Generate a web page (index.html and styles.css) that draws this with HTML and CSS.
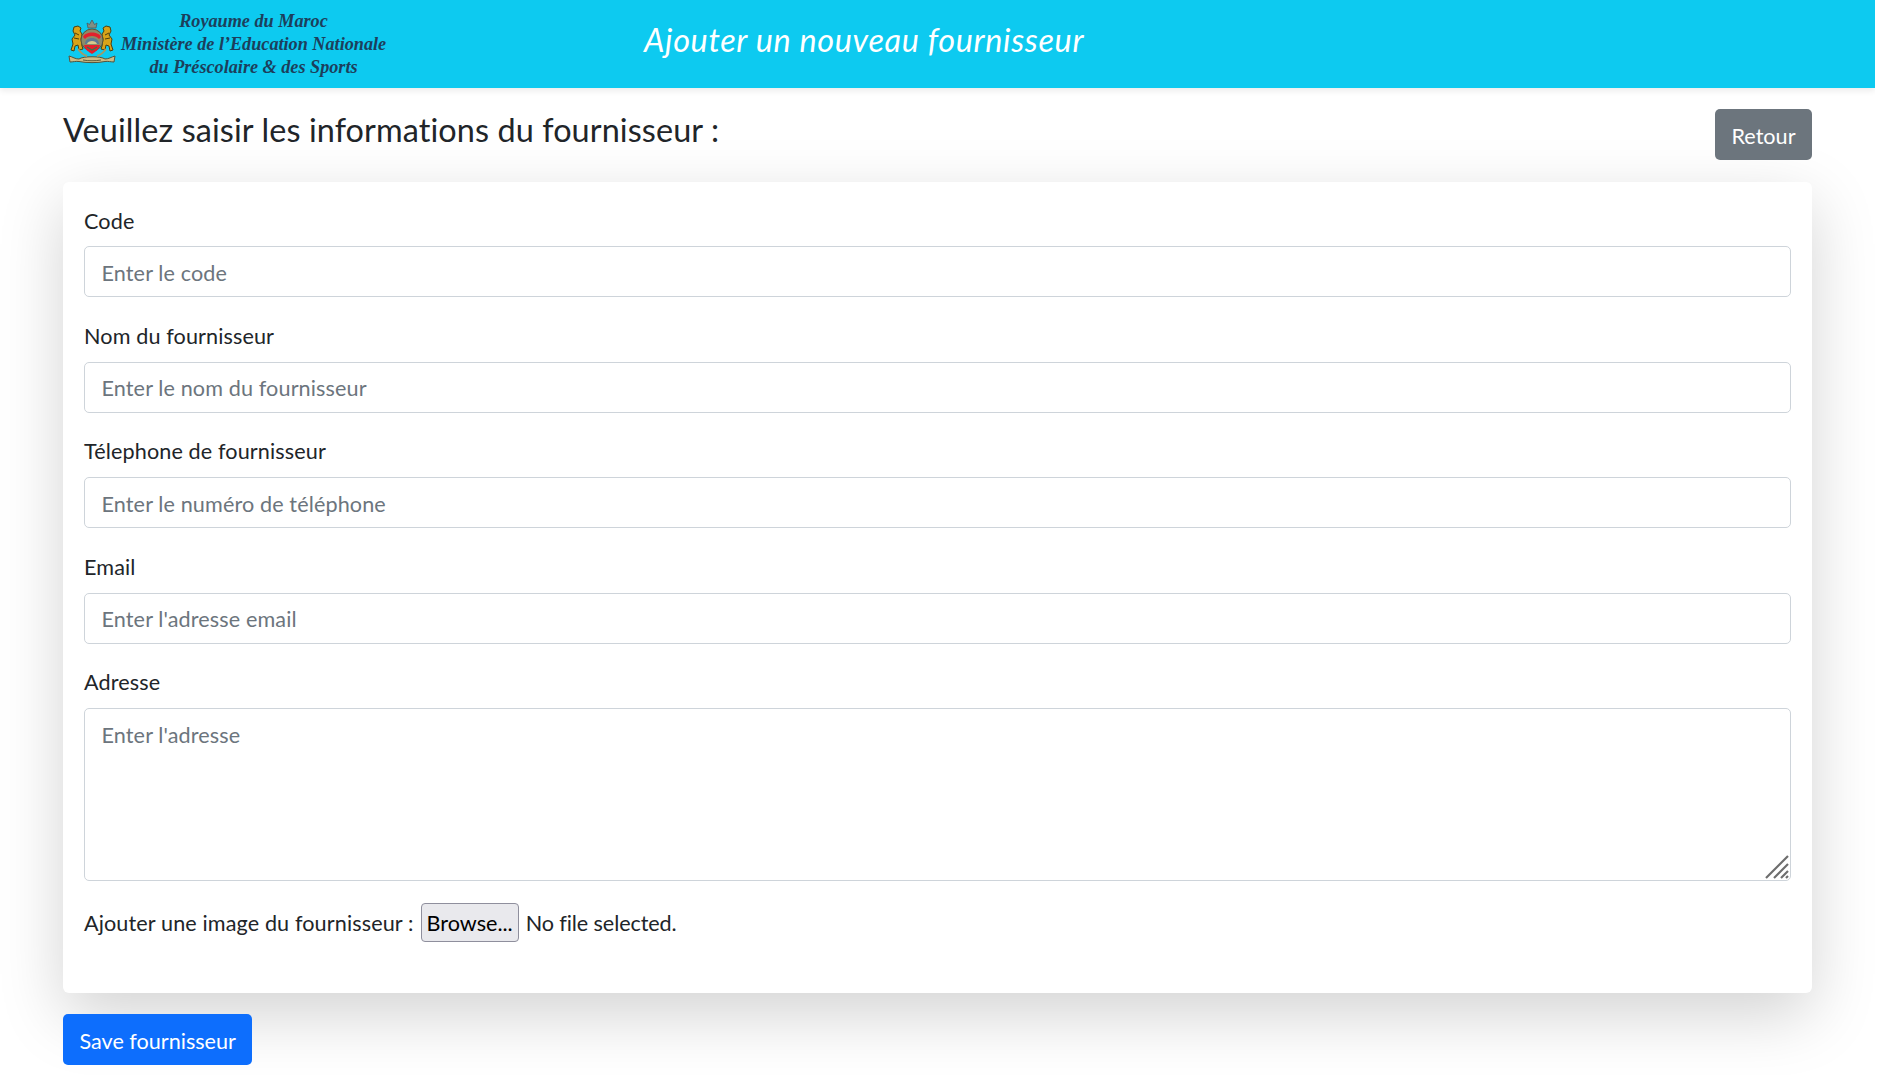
FILE: index.html
```html
<!DOCTYPE html>
<html lang="fr">
<head>
<meta charset="utf-8">
<title>Ajouter un nouveau fournisseur</title>
<link rel="stylesheet" href="styles.css">
</head>
<body>
<div class="page">
<header class="topbar">
  <div class="brand">
    <svg class="crest" viewBox="0 0 52 48" width="52" height="48" aria-hidden="true">
      <path d="M3 38c4 1 6 3 10 3 4-3 22-3 26 0 4 0 6-2 10-3l-1 6c-3 0-6-1-9-.5-7 1.500-19 1.500-26 0-3-.5-6 .5-9 .5z" fill="#cdbb86" stroke="#56533a" stroke-width="1"/>
      <path d="M17 42c5 1 13 1 18 0" fill="none" stroke="#5a5a3e" stroke-width="1"/>
      <path d="M8 9l4-1 3 2-1 3 2 3-1 5 1 7 1 3-4 1-1-5-3 1-1 5-3-1 2-6-1-5 3-4-2-4z" fill="#d9a318" stroke="#4d3f10" stroke-width="1"/>
      <path d="M44 9l-4-1-3 2 1 3-2 3 1 5-1 7-1 3 4 1 1-5 3 1 1 5 3-1-2-6 1-5-3-4 2-4z" fill="#d9a318" stroke="#4d3f10" stroke-width="1"/>
      <path d="M9 15l4 2M8 20l5 1M43 15l-4 2M44 20l-5 1" stroke="#4d3f10" stroke-width="1"/>
      <path d="M12 31c3 4 5 6 9 7M40 31c-3 4-5 6-9 7" fill="none" stroke="#a39a66" stroke-width="2"/>
      <path d="M22 10l-1-5 2.500 1.500L26 2l2.500 4.500L31 5l-1 5z" fill="#7f8f84" stroke="#4a5a60" stroke-width=".8"/>
      <circle cx="26" cy="22" r="11" fill="#8e8b66" stroke="#55553c" stroke-width="1"/>
      <path d="M17 19c2-6 16-6 18 0l-2 2c-3-4-11-4-14 0z" fill="#e4202c"/>
      <path d="M18 27h16c-1 5-5 7-8 9-3-2-7-4-8-9z" fill="#e4202c"/>
      <path d="M19 26c0-8 14-8 14 0z" fill="#5c7a92"/>
      <path d="M21 26c1-4 9-4 10 0z" fill="#d6c98c"/>
      <path d="M21 29l5 3 5-3" fill="none" stroke="#2f7d4d" stroke-width="1.200"/>
    </svg>
    <div class="brand-text">
      <span>Royaume du Maroc</span>
      <span>Ministère de l’Education Nationale</span>
      <span>du Préscolaire &amp; des Sports</span>
    </div>
  </div>
  <h1 class="page-title">Ajouter un nouveau fournisseur</h1>
</header>
<main class="content">
  <div class="heading-row">
    <h2 class="heading">Veuillez saisir les informations du fournisseur :</h2>
    <a class="btn btn-grey">Retour</a>
  </div>
  <form class="card">
    <div class="field">
      <label class="field-label" for="code">Code</label>
      <input class="control" id="code" type="text" placeholder="Enter le code">
    </div>
    <div class="field">
      <label class="field-label" for="nom">Nom du fournisseur</label>
      <input class="control" id="nom" type="text" placeholder="Enter le nom du fournisseur">
    </div>
    <div class="field">
      <label class="field-label" for="tel">Télephone de fournisseur</label>
      <input class="control" id="tel" type="text" placeholder="Enter le numéro de téléphone">
    </div>
    <div class="field">
      <label class="field-label" for="email">Email</label>
      <input class="control" id="email" type="text" placeholder="Enter l'adresse email">
    </div>
    <div class="field">
      <label class="field-label" for="adresse">Adresse</label>
      <div class="area-wrap">
        <textarea class="control area" id="adresse" placeholder="Enter l'adresse"></textarea>
        <svg class="grip" viewBox="0 0 24 24" width="24" height="24" aria-hidden="true">
          <path d="M1 23L23 1M9 23L23 9M16 23l7-7M21 23l2-2" stroke="#6e6e6e" stroke-width="2.200" fill="none"/>
        </svg>
      </div>
    </div>
    <div class="file-row">
      <span class="file-text">Ajouter une image du fournisseur :</span>
      <button class="browse" type="button">Browse...</button>
      <span class="file-text file-status">No file selected.</span>
    </div>
  </form>
  <button class="btn btn-blue" type="button">Save fournisseur</button>
</main>
</div>
</body>
</html>
```
FILE: styles.css
```css
* { box-sizing: border-box; }
html, body { margin: 0; height: 100%; overflow: hidden; }
body {
  background: #fff;
  color: #212529;
  font-family: "Lato", "Open Sans", sans-serif;
  font-size: 21.6px;
  line-height: 1.5;
  letter-spacing: .12px;
}
.page { width: 1875px; height: 100%; overflow: hidden; }
.topbar {
  display: flex;
  align-items: center;
  height: 88px;
  padding-left: 66px;
  background: #0dcaf0;
  box-shadow: 0 3px 6px rgba(0, 0, 0, .075);
}
.brand { display: flex; align-items: center; width: 578px; }
.crest { flex: none; margin-top: -4px; }
.brand-text {
  display: flex;
  flex-direction: column;
  align-items: center;
  width: 265px;
  margin: 1px 0 0 3px;
  font-family: "Liberation Serif", serif;
  font-style: italic;
  font-weight: 700;
  font-size: 18.2px;
  line-height: 23px;
  letter-spacing: 0;
  color: #1c3f5c;
  white-space: nowrap;
}
.page-title {
  margin: -7px 0 0;
  font-size: 32.4px;
  font-weight: 400;
  font-style: italic;
  color: #fff;
  line-height: 1.2;
  letter-spacing: .65px;
}
.content { padding: 0 63px; }
.heading-row {
  display: flex;
  justify-content: space-between;
  align-items: flex-start;
  height: 94px;
  padding-top: 21px;
}
.heading {
  margin: 2px 0 0;
  font-size: 32.4px;
  font-weight: 400;
  line-height: 1.2;
  letter-spacing: .1px;
}
.btn {
  display: inline-block;
  height: 51px;
  padding: 0 16.5px;
  border: 0;
  border-radius: 5px;
  color: #fff;
  font: inherit;
  line-height: 54px;
  letter-spacing: 0;
}
.btn-grey { background: #6c757d; }
.btn-blue { background: #0d6efd; margin-top: 21px; }
.card {
  height: 811px;
  padding: 21.6px 21px;
  background: #fff;
  border-radius: 6px;
  box-shadow: 0 21.6px 65px rgba(0, 0, 0, .175);
}
.field { margin-bottom: 21.6px; }
.field-label { display: block; padding-top: 1px; margin-bottom: 9.4px; line-height: 32.4px; }
.control {
  display: block;
  width: 100%;
  height: 51px;
  padding: 2px 16.5px 0;
  border: 1.3px solid #ced4da;
  border-radius: 5px;
  background: #fff;
  color: #212529;
  font: inherit;
  letter-spacing: inherit;
}
.control::placeholder { color: #6c757d; opacity: 1; }
.area-wrap { position: relative; }
.area { height: 173px; padding-top: 10px; resize: none; }
.grip { position: absolute; right: 2px; bottom: 2px; }
.file-row { display: flex; align-items: center; gap: 7px; margin-top: 1px; }
.file-text { padding-top: 2px; }
.file-status { letter-spacing: -.1px; }
.browse {
  height: 39px;
  padding: 2px 5px 0;
  border: 1px solid #8f8f9d;
  border-radius: 4px;
  background: #e9e9ed;
  color: #000;
  font: inherit;
  letter-spacing: 0;
}
```
